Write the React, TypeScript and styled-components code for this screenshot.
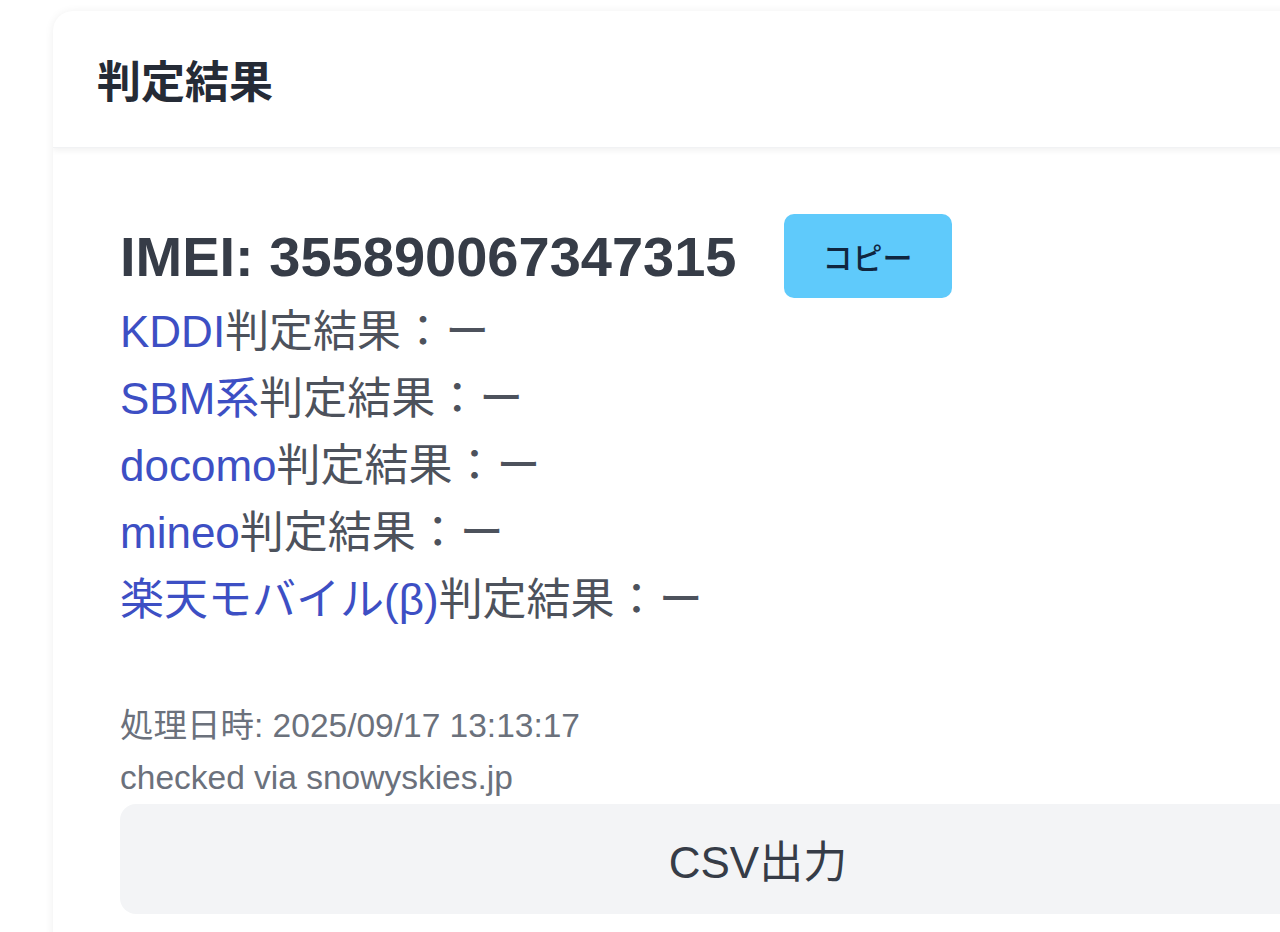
import React from 'react';
import styled, {createGlobalStyle} from "styled-components";

const GlobalStyle = createGlobalStyle`
  html, body {
    margin: 0;
    padding: 0;
    background: #ffffff;
    overflow: hidden;
    font-family: "Liberation Sans", "Noto Sans CJK JP", sans-serif;
  }
`

type Carrier = {
    name: string
    result: string
}

const carriers: Carrier[] = [
    {name: 'KDDI', result: 'ー'},
    {name: 'SBM系', result: 'ー'},
    {name: 'docomo', result: 'ー'},
    {name: 'mineo', result: 'ー'},
    {name: '楽天モバイル(β)', result: 'ー'},
]

export default function App() {
    return (
        <>
            <GlobalStyle/>
            <Page>
                <Card>
                    <Header>
                        <Title>判定結果</Title>
                    </Header>
                    <Body>
                        <ImeiRow>
                            <Imei>IMEI: 355890067347315</Imei>
                            <CopyButton>コピー</CopyButton>
                        </ImeiRow>
                        <Results>
                            {carriers.map(c => (
                                <ResultLine key={c.name}>
                                    <CarrierLink>{c.name}</CarrierLink>判定結果：{c.result}
                                </ResultLine>
                            ))}
                        </Results>
                        <Meta>
                            <MetaLine>処理日時: 2025/09/17 13:13:17</MetaLine>
                            <MetaLine>checked via snowyskies.jp</MetaLine>
                        </Meta>
                        <CsvButton>CSV出力</CsvButton>
                    </Body>
                </Card>
            </Page>
        </>
    );
}

// the card is wider than the window, the page clips it at the right
const Page = styled.div`
  display: flex;
  padding: 11px 0 0 53px;
  width: 1280px;
  height: 932px;
  box-sizing: border-box;
  overflow: hidden;
`

const Card = styled.div`
  flex: 0 0 1410px;
  align-self: flex-start;
  background: #ffffff;
  border-radius: 20px;
  box-shadow: 0 1px 10px rgba(0, 0, 0, 0.07);
  overflow: hidden;
`

const Header = styled.div`
  height: 136px;
  display: flex;
  align-items: center;
  padding: 0 44px;
  box-shadow: 0 3px 6px rgba(0, 0, 0, 0.05);
  border-bottom: 1px solid #f1f2f4;
  position: relative;
`

const Title = styled.h2`
  margin: 0;
  font-size: 44px;
  font-weight: 700;
  color: #252b36;
`

const Body = styled.div`
  padding: 66px 67px 40px;
`

const ImeiRow = styled.div`
  display: flex;
  align-items: center;
  gap: 47px;
  height: 84px;
`

const Imei = styled.div`
  font-size: 56px;
  font-weight: 700;
  color: #363c47;
`

const CopyButton = styled.button`
  width: 168px;
  height: 84px;
  border: none;
  border-radius: 10px;
  background: #5fcafb;
  color: #10263f;
  font-family: "Noto Sans CJK JP", sans-serif;
  font-size: 30px;
  font-weight: 500;
  cursor: pointer;
`

const Results = styled.div`
  display: flex;
  flex-direction: column;
`

const ResultLine = styled.div`
  font-size: 44px;
  line-height: 67px;
  color: #4d525c;
`

const CarrierLink = styled.a`
  color: #3d4fc4;
  text-decoration: none;
`

const Meta = styled.div`
  margin-top: 67px;
  display: flex;
  flex-direction: column;
`

const MetaLine = styled.div`
  font-size: 33.5px;
  line-height: 52px;
  color: #6b717c;
`

const CsvButton = styled.button`
  display: block;
  width: 100%;
  height: 110px;
  border: none;
  border-radius: 16px;
  background: #f3f4f6;
  color: #363c47;
  font-family: "Liberation Sans", "Noto Sans CJK JP", sans-serif;
  font-size: 44px;
  cursor: pointer;
`
